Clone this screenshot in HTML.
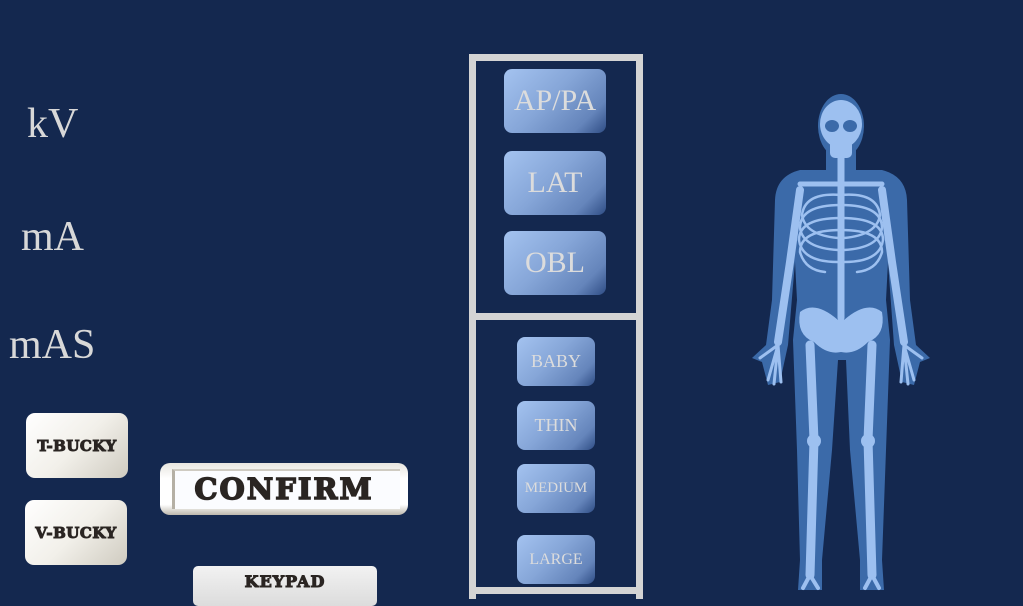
<!DOCTYPE html>
<html><head><meta charset="utf-8"><style>
*{margin:0;padding:0;box-sizing:border-box}
body{width:1023px;height:599px;background:#14284f;position:relative;overflow:hidden;font-family:"Liberation Serif",serif}
.lbl{position:absolute;color:#d8d8d8;font-size:42px;line-height:1}
.wb{position:absolute;border-radius:9px;background:linear-gradient(135deg,#ffffff 0%,#f2f0ea 50%,#cfcbc0 100%);display:flex;align-items:center;justify-content:center;font-family:"DejaVu Serif",serif;font-weight:bold;color:#2a2522;font-size:15px;-webkit-text-stroke:1px #2a2522;letter-spacing:0.5px}
.bb{position:absolute;border-radius:8px;background:linear-gradient(135deg,#a4c3f0 0%,#86a6d8 45%,#6585bb 80%,#2f4d85 100%);display:flex;align-items:center;justify-content:center;color:#dcdcdc}
.fr{position:absolute;background:#d4d4d4}
</style></head><body>
<div class="lbl" style="left:27px;top:103px">kV</div>
<div class="lbl" style="left:21px;top:216px">mA</div>
<div class="lbl" style="left:9px;top:324px">mAS</div>

<div class="wb" style="left:26px;top:413px;width:102px;height:65px">T-BUCKY</div>
<div class="wb" style="left:25px;top:500px;width:102px;height:65px">V-BUCKY</div>
<div class="wb" style="left:160px;top:463px;width:248px;height:52px;border-radius:10px;background:linear-gradient(180deg,#e8e6e0,#fff 30%,#fff 80%,#bdb8ad)">
  <div style="position:absolute;left:12px;top:6px;right:8px;bottom:6px;background:#fbfcff;border-left:3px solid #b5b0a5;border-top:2px solid #cfcbc2"></div>
  <span style="position:relative;font-size:29px;letter-spacing:2px;-webkit-text-stroke:1.5px #2a2522">CONFIRM</span></div>
<div class="wb" style="left:193px;top:566px;width:184px;height:40px;border-radius:5px;background:linear-gradient(180deg,#f2f2f2,#dcdcdc);align-items:flex-start;padding-top:6px;font-size:16px;letter-spacing:1px">KEYPAD</div>

<div class="fr" style="left:469px;top:54px;width:174px;height:7px"></div>
<div class="fr" style="left:469px;top:54px;width:7px;height:545px"></div>
<div class="fr" style="left:636px;top:54px;width:7px;height:545px"></div>
<div class="fr" style="left:469px;top:313px;width:174px;height:7px"></div>
<div class="fr" style="left:469px;top:587px;width:174px;height:7px"></div>

<div class="bb" style="left:504px;top:69px;width:102px;height:64px;font-size:30px">AP/PA</div>
<div class="bb" style="left:504px;top:151px;width:102px;height:64px;font-size:30px">LAT</div>
<div class="bb" style="left:504px;top:231px;width:102px;height:64px;font-size:30px">OBL</div>
<div class="bb" style="left:517px;top:337px;width:78px;height:49px;font-size:18px">BABY</div>
<div class="bb" style="left:517px;top:401px;width:78px;height:49px;font-size:18px">THIN</div>
<div class="bb" style="left:517px;top:464px;width:78px;height:49px;font-size:15px">MEDIUM</div>
<div class="bb" style="left:517px;top:535px;width:78px;height:49px;font-size:16px">LARGE</div>

<svg style="position:absolute;left:0;top:0" width="1023" height="599">
<g fill="#3b6aa9">
<ellipse cx="841" cy="126" rx="23" ry="32"/>
<rect x="826" y="148" width="30" height="32"/>
<path d="M800,170 Q776,176 775,200 L772,300 L766,345 L752,358 L762,362 L768,385 L780,382 L788,345 L795,262 L797,300 L793,340 L797,450 L800,560 L798,590 L822,590 L822,560 L832,450 L838,360 L846,360 L850,450 L860,560 L860,590 L884,590 L882,560 L886,450 L890,340 L886,300 L888,262 L894,345 L902,382 L914,385 L920,362 L930,358 L916,345 L910,300 L907,200 Q906,176 882,170 Z"/>
</g>
<g fill="#9dc0f0">
<ellipse cx="841" cy="124" rx="21" ry="24"/>
<rect x="830" y="138" width="22" height="20" rx="5"/>
<ellipse cx="832" cy="126" rx="7" ry="6" fill="#3b6aa9"/>
<ellipse cx="850" cy="126" rx="7" ry="6" fill="#3b6aa9"/>
</g>
<g stroke="#9dc0f0" fill="none" stroke-linecap="round">
<line x1="841" y1="158" x2="841" y2="318" stroke-width="7"/>
<line x1="800" y1="184" x2="882" y2="184" stroke-width="5"/>
<g stroke-width="2.5">
<path d="M841,195 Q805,192 802,215 Q805,235 838,238"/>
<path d="M841,195 Q877,192 880,215 Q877,235 844,238"/>
<path d="M841,205 Q800,205 800,228 Q803,248 838,250"/>
<path d="M841,205 Q882,205 882,228 Q879,248 844,250"/>
<path d="M841,218 Q799,218 799,240 Q802,262 838,262"/>
<path d="M841,218 Q883,218 883,240 Q880,262 844,262"/>
<path d="M841,230 Q800,230 800,252 Q805,270 825,272"/>
<path d="M841,230 Q882,230 882,252 Q877,270 857,272"/>
</g>
<path d="M800,190 L790,262 L778,342" stroke-width="8"/>
<path d="M882,190 L892,262 L904,342" stroke-width="8"/>
<path d="M778,345 L768,380 M778,345 L774,384 M778,345 L781,382 M778,345 L760,358" stroke-width="3"/>
<path d="M904,345 L914,380 M904,345 L908,384 M904,345 L901,382 M904,345 L922,358" stroke-width="3"/>
<path d="M810,345 L814,440 L810,575" stroke-width="9"/>
<path d="M872,345 L868,440 L872,575" stroke-width="9"/>
<path d="M810,575 L803,588 M810,575 L818,588" stroke-width="4"/>
<path d="M872,575 L865,588 M872,575 L879,588" stroke-width="4"/>
</g>
<g fill="#9dc0f0">
<path d="M800,312 Q815,300 838,320 L844,320 Q867,300 882,312 Q886,335 868,342 Q855,355 841,352 Q827,355 814,342 Q796,335 800,312Z"/>
<circle cx="814" cy="441" r="7"/><circle cx="868" cy="441" r="7"/>
</g>
</svg>
</body></html>
